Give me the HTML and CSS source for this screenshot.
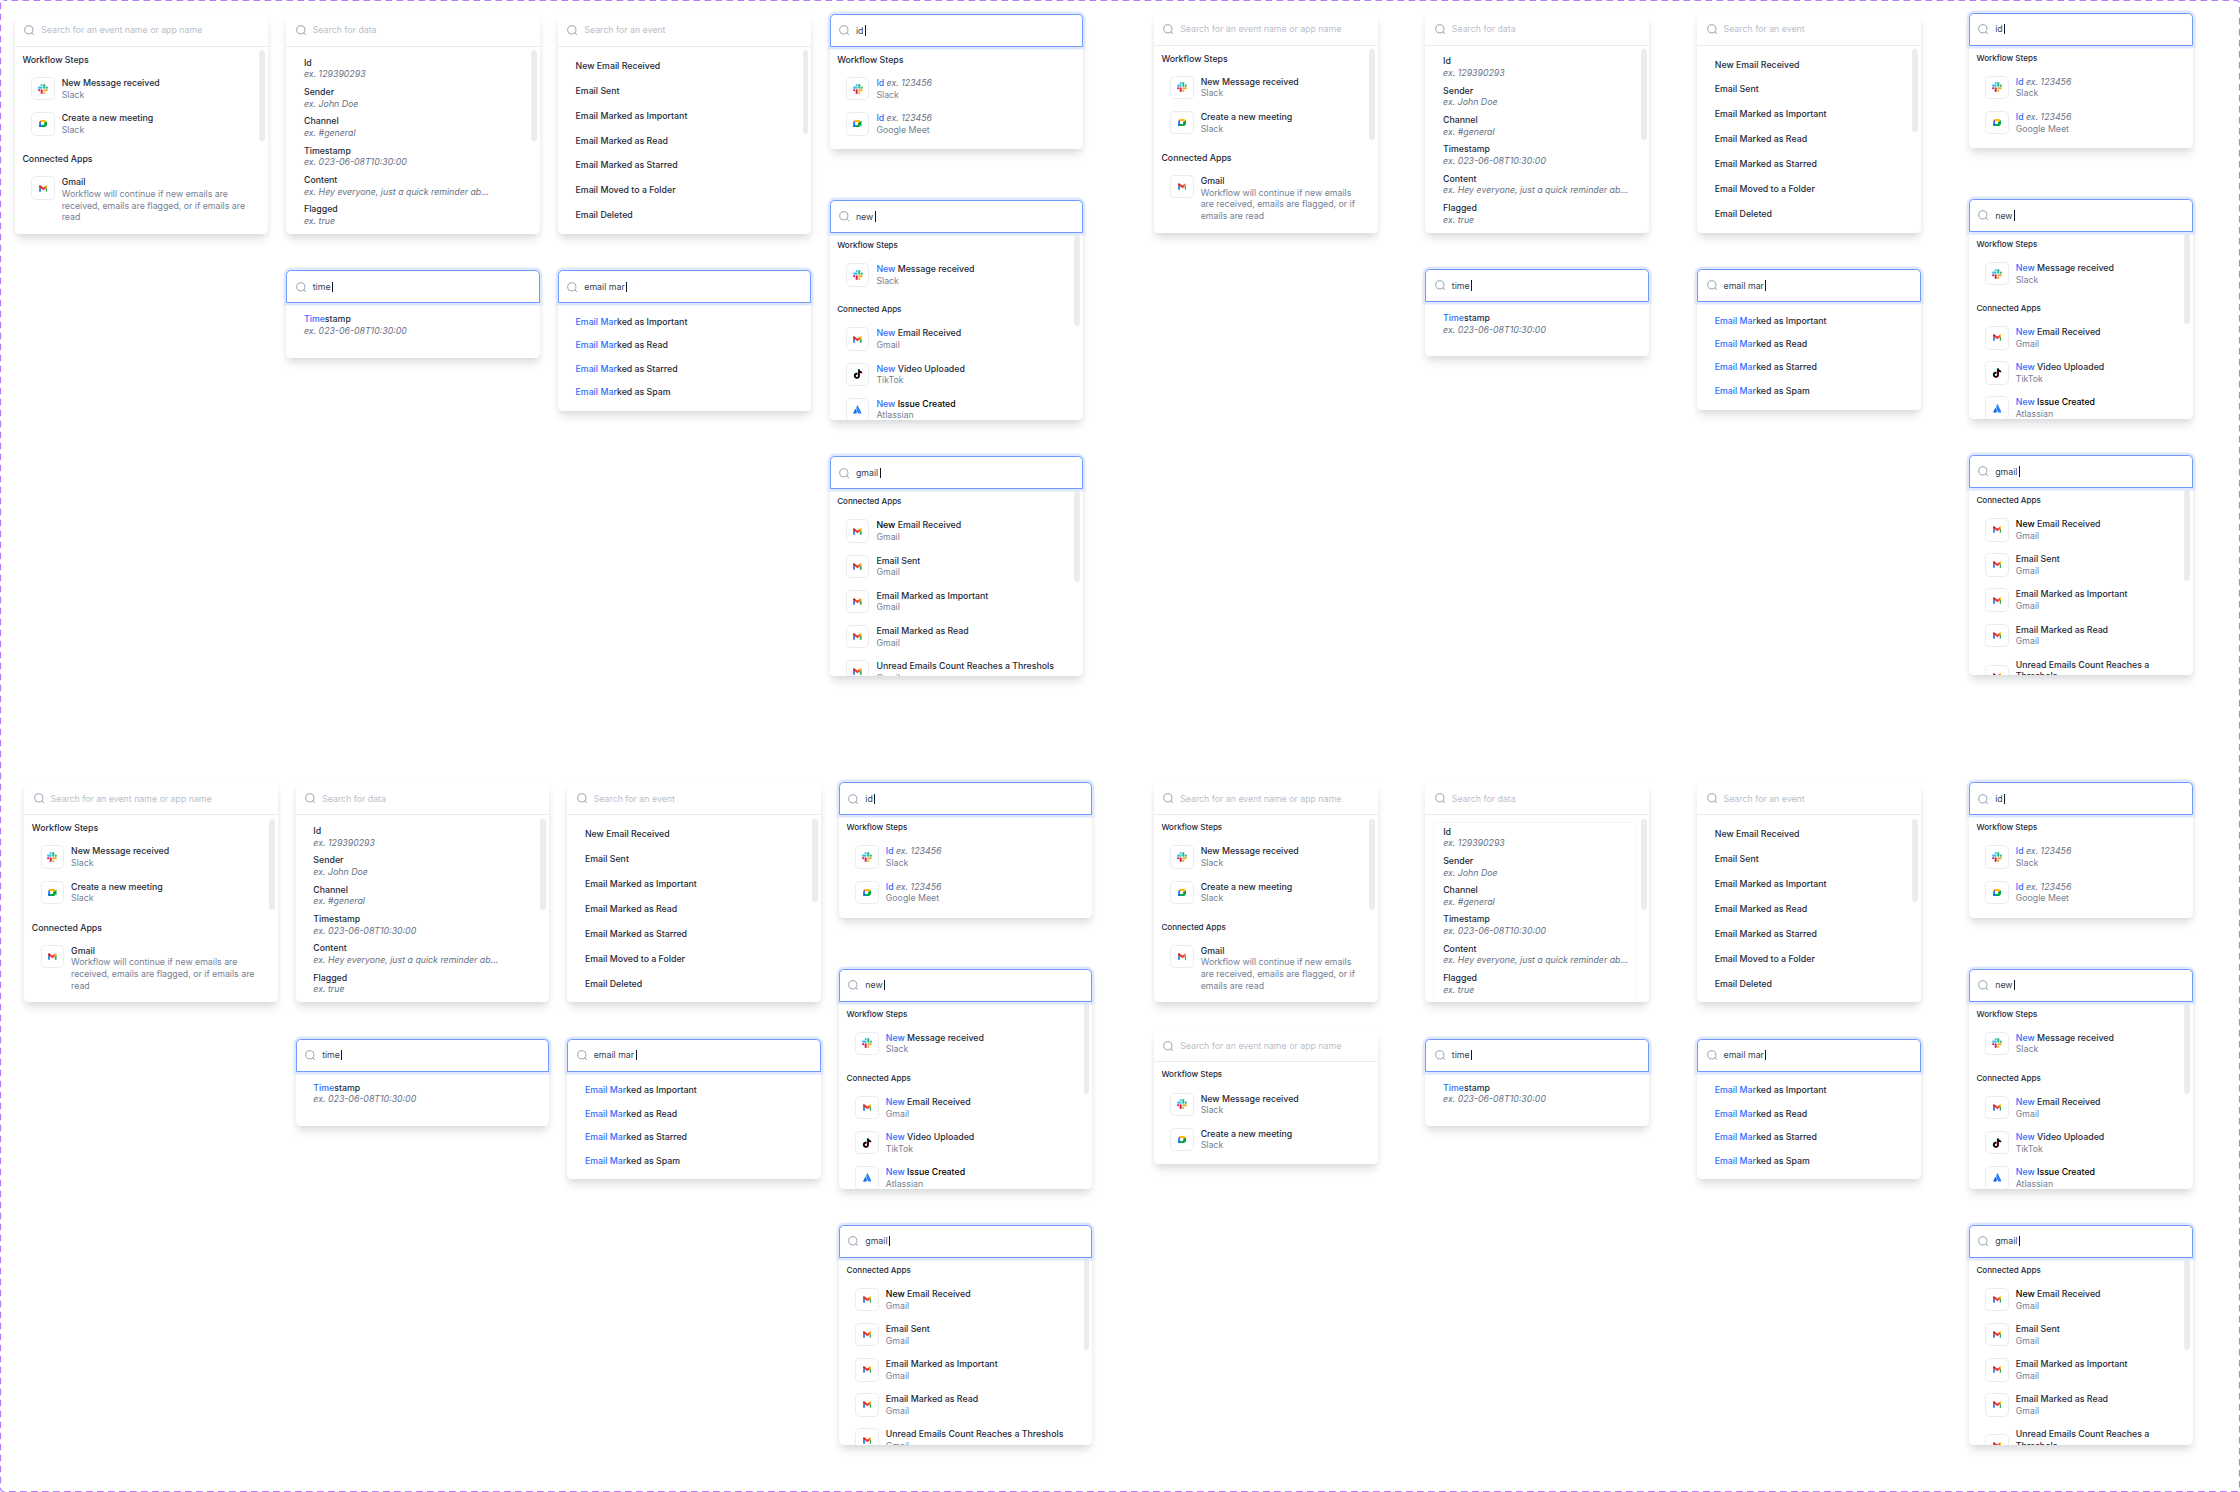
FILE: index.html
```html
<!DOCTYPE html>
<html lang="en">
<head>
  <meta charset="UTF-8">
  <meta name="viewport" content="width=device-width,initial-scale=1">
  <title>Search dropdowns</title>
  <link rel="stylesheet" href="styles.css">
</head>
<body>
  <!-- Icons -->
  <svg class="sprite">
    <symbol id="search" viewBox="0 0 18 18">
      <circle cx="8.2" cy="8.2" r="7" fill="none" stroke="#98a2b3" stroke-width="1.7"/>
      <path d="M13.2 13.2l3.8 3.8" fill="none" stroke="#98a2b3" stroke-width="1.7" stroke-linecap="round"/>
    </symbol>
    <symbol id="slack" viewBox="0 0 24 24">
      <path fill="#E01E5A" d="M5.042 15.165a2.528 2.528 0 0 1-2.52 2.523A2.528 2.528 0 0 1 0 15.165a2.527 2.527 0 0 1 2.522-2.52h2.52v2.52zM6.313 15.165a2.527 2.527 0 0 1 2.521-2.52 2.527 2.527 0 0 1 2.521 2.52v6.313A2.528 2.528 0 0 1 8.834 24a2.528 2.528 0 0 1-2.521-2.522v-6.313z"/>
      <path fill="#36C5F0" d="M8.834 5.042a2.528 2.528 0 0 1-2.521-2.52A2.528 2.528 0 0 1 8.834 0a2.528 2.528 0 0 1 2.521 2.522v2.52H8.834zM8.834 6.313a2.528 2.528 0 0 1 2.521 2.521 2.528 2.528 0 0 1-2.521 2.521H2.522A2.528 2.528 0 0 1 0 8.834a2.528 2.528 0 0 1 2.522-2.521h6.312z"/>
      <path fill="#2EB67D" d="M18.956 8.834a2.528 2.528 0 0 1 2.522-2.521A2.528 2.528 0 0 1 24 8.834a2.528 2.528 0 0 1-2.522 2.521h-2.522V8.834zM17.688 8.834a2.528 2.528 0 0 1-2.523 2.521 2.527 2.527 0 0 1-2.52-2.521V2.522A2.527 2.527 0 0 1 15.165 0a2.528 2.528 0 0 1 2.523 2.522v6.312z"/>
      <path fill="#ECB22E" d="M15.165 18.956a2.528 2.528 0 0 1 2.523 2.522A2.528 2.528 0 0 1 15.165 24a2.527 2.527 0 0 1-2.52-2.522v-2.522h2.52zM15.165 17.688a2.527 2.527 0 0 1-2.52-2.523 2.526 2.526 0 0 1 2.52-2.52h6.313A2.527 2.527 0 0 1 24 15.165a2.528 2.528 0 0 1-2.522 2.523h-6.313z"/>
    </symbol>
    <symbol id="meet" viewBox="0 0 87.5 72">
      <path fill="#00832d" d="M49.5 36l8.53 9.75 11.47 7.33 2-17.02-2-16.64-11.69 6.44z"/>
      <path fill="#0066da" d="M0 51.5V66c0 3.315 2.685 6 6 6h14.5l3-10.96-3-9.54-9.95-3z"/>
      <path fill="#e94235" d="M20.5 0L0 20.5l10.55 3 9.95-3 2.95-9.41z"/>
      <path fill="#2684fc" d="M20.5 20.5H0v31h20.5z"/>
      <path fill="#00ac47" d="M82.6 8.68L69.5 19.42v33.66l13.16 10.79c1.97 1.54 4.85.135 4.85-2.37V11c0-2.535-2.945-3.925-4.91-2.32zM49.5 36v15.5h-29V72h43c3.315 0 6-2.685 6-6V53.08z"/>
      <path fill="#ffba00" d="M63.5 0h-43v20.5h29V36l20-16.57V6c0-3.315-2.685-6-6-6z"/>
    </symbol>
    <symbol id="gmail" viewBox="52 42 88 66">
      <path fill="#4285f4" d="M58 108h14V74L52 59v43c0 3.32 2.69 6 6 6"/>
      <path fill="#34a853" d="M120 108h14c3.32 0 6-2.69 6-6V59l-20 15"/>
      <path fill="#fbbc04" d="M120 48v26l20-15v-8c0-7.42-8.47-11.65-14.4-7.2"/>
      <path fill="#ea4335" d="M72 74V48l24 18 24-18v26L96 92"/>
      <path fill="#c5221f" d="M52 51v8l20 15V48l-5.6-4.2c-5.94-4.45-14.4-.22-14.4 7.2"/>
    </symbol>
    <path id="note" d="M12.525.02c1.31-.02 2.61-.01 3.91-.02.08 1.53.63 3.09 1.75 4.17 1.12 1.11 2.7 1.62 4.24 1.79v4.03c-1.44-.05-2.89-.35-4.2-.97-.57-.26-1.1-.59-1.62-.93-.01 2.92.01 5.84-.02 8.75-.08 1.4-.54 2.79-1.35 3.94-1.31 1.92-3.58 3.17-5.91 3.21-1.43.08-2.86-.31-4.08-1.03-2.02-1.19-3.44-3.37-3.65-5.71-.02-.5-.03-1-.01-1.49.18-1.9 1.12-3.72 2.58-4.96 1.66-1.44 3.98-2.13 6.15-1.72.02 1.48-.04 2.96-.04 4.44-.99-.32-2.15-.23-3.02.37-.63.41-1.11 1.04-1.36 1.75-.21.51-.15 1.07-.14 1.61.24 1.64 1.82 3.02 3.5 2.87 1.12-.01 2.19-.66 2.77-1.61.19-.33.4-.67.41-1.06.1-1.79.06-3.57.07-5.36.01-4.03-.01-8.05.02-12.07z"/>
    <symbol id="tiktok" viewBox="-1 -1 26 26">
      <use href="#note" x="-.9" y="-.7" fill="#25f4ee"/>
      <use href="#note" x=".9" y=".7" fill="#fe2c55"/>
      <use href="#note"/>
    </symbol>
    <symbol id="atlassian" viewBox="0 0 24 24">
      <path fill="#1868db" d="M7.12 11.084a.683.683 0 0 0-1.16.126L.075 22.974a.703.703 0 0 0 .63 1.018h8.19a.678.678 0 0 0 .63-.39c1.767-3.65.696-9.203-2.406-12.52z"/>
      <path fill="#2684ff" d="M11.434.386a15.515 15.515 0 0 0-.906 15.317l3.95 7.9a.703.703 0 0 0 .628.388h8.19a.703.703 0 0 0 .63-1.017L12.63.38a.664.664 0 0 0-1.196.006z"/>
    </symbol>
  </svg>

  <main id="boards"></main>
  <svg class="frame"><rect x=".5" y=".5" width="2239" height="1491" rx="3"/></svg>

  <script src="script.js"></script>
</body>
</html>
```
FILE: styles.css
```css
/* 1rem = 10 design px */
html { font-size:5.862px; }
body { margin:0; background:#fff; color:#1d2939; font-family:Inter, sans-serif; font-size:1.5rem; line-height:2rem; overflow:hidden; }
.sprite { display:none; }
.frame { position:absolute; top:0; left:0; width:2240px; height:1492px; pointer-events:none; }
.frame rect { fill:none; stroke:#b57bff; stroke-width:1.2; stroke-dasharray:6.6 4.4; stroke-dashoffset:3; }

#boards { display:grid; grid-template-columns:1153.8px 1fr; grid-template-rows:782.4px 1fr; width:2240px; height:1492px; }
.board { display:grid; grid-template-columns:repeat(4, 253.4px); column-gap:18.2px; align-items:start; align-content:start; }
.board.narrow { grid-template-columns:repeat(4, 224px); column-gap:47.7px; }
.b1 { padding:14px 0 0 14.8px; }
.b2 { padding-top:12.7px; }
.b3 { padding-left:24.2px; }
.col { display:flex; flex-direction:column; gap:36.6px; }
.col.hits { gap:36.3px; }
.col.hits .card:first-child { margin-bottom:14.6px; }
.col.short { gap:27.4px; }

/* Dropdown card */
.card { display:flex; flex-direction:column; border-radius:.8rem; background:#fff; box-shadow:0 1.2rem 1.6rem -.4rem rgba(16,24,40,.12), 0 .4rem 1rem -.2rem rgba(16,24,40,.06); }
.field-box { display:flex; align-items:center; gap:1.1rem; height:5.6rem; box-sizing:border-box; flex:none; padding:.1rem 0 0 1.6rem; border-bottom:1px solid #eaecf0; border-radius:.8rem .8rem 0 0; color:#b9c0cc; background:#fff; }
.field-box svg { flex:none; width:1.8rem; height:1.8rem; }
.field-box.focus { position:relative; z-index:1; padding:0 0 0 calc(1.6rem - 1px); border:1px solid #6f99ff; box-shadow:0 0 0 2.4px #dfe8ff; color:#344054; }
.caret { width:1px; height:1.8rem; margin-left:-.85rem; background:#101828; }
.results { position:relative; flex:1; min-height:0; overflow:hidden; border-radius:0 0 .8rem .8rem; }
.bar { position:absolute; top:.6rem; right:.5rem; width:1rem; height:15.5rem; border-radius:.5rem; background:#eaecf0; }
.focus + .results .bar { top:.3rem; }
.bar.small { height:14.2rem; }

/* Sections with app icons */
h2 { margin:0; padding:1.2rem 1.3rem .95rem; font-size:1.5rem; line-height:2rem; font-weight:500; }
h2.sm { font-size:1.375rem; }
.item + h2 { padding-top:2rem; }
.item { display:flex; align-items:flex-start; gap:1.2rem; padding:1rem 2.3rem 1rem 2.8rem; }
.item.mid { align-items:center; }
.app { flex:none; display:flex; align-items:center; justify-content:center; width:4rem; height:4rem; box-sizing:border-box; border:1px solid #eaecf0; border-radius:.8rem; }
.app svg { width:1.7rem; height:1.7rem; }
.app .meet, .app .gmail { width:1.5rem; height:1.2rem; }
.app .atlassian { width:1.5rem; height:1.5rem; }
.name { font-weight:500; }
.sub { color:#758095; }
.hit { color:#2f6bff; font-weight:500; }
.strong { color:#000; }
i { color:#667085; font-weight:400; }

/* Text-only lists */
.list { padding:1.2rem 3rem 0; }
.list.boxed { margin:1.1rem 2.1rem 0 1.3rem; padding:0 0 0 1.55rem; height:100%; border:1px solid #f5f6f8; border-radius:.8rem; }
.field { padding:.5rem 0; white-space:nowrap; }
.event { padding:1.125rem 0; font-weight:500; }
.found { padding-top:1.15rem; }
.found .event { padding:1rem 0; }
.events { padding-top:1.1rem; }
```
FILE: script.js
```js
const icon = name => `<svg class="${name}"><use href="#${name}"/></svg>`;
const app = name => `<div class="app">${icon(name)}</div>`;
const hit = t => `<span class="hit">${t}</span>`;

function item(ico, name, sub, cls = '') {
  return `<div class="item ${cls}">${app(ico)}<div><div class="name">${name}</div><div class="sub">${sub}</div></div></div>`;
}
function head(text, small) {
  return `<h2 class="${small ? 'sm' : ''}">${text}</h2>`;
}
function field(name, ex) {
  return `<div class="field"><div class="name">${name}</div><i>ex. ${ex}</i></div>`;
}
const event = text => `<div class="event">${text}</div>`;

// height is in design px
function card(height, placeholder, query, body, bar = '') {
  const search = query
    ? `<div class="field-box focus">${icon('search')}<span>${query}</span><span class="caret"></span></div>`
    : `<div class="field-box">${icon('search')}<span>${placeholder}</span></div>`;
  return `<section class="card" style="height:${height / 10}rem">${search}<div class="results">${body}${bar}</div></section>`;
}

const bar = '<div class="bar"></div>';
const smallBar = '<div class="bar small"></div>';

function board({ cls, narrow, smallHeads, smallId, boxed, extra }) {
  const steps = head('Workflow Steps', smallHeads)
    + item('slack', 'New Message received', 'Slack')
    + item('meet', 'Create a new meeting', 'Slack');
  const gmail = head('Connected Apps', smallHeads)
    + item('gmail', 'Gmail', 'Workflow will continue if new emails are received, emails are flagged, or if emails are read');
  const fields = [
    ['Id', '129390293'], ['Sender', 'John Doe'], ['Channel', '#general'],
    ['Timestamp', '023-06-08T10:30:00'], ['Content', 'Hey everyone, just a quick reminder ab...'], ['Flagged', 'true']
  ].map(f => field(...f)).join('');
  const events = ['New Email Received', 'Email Sent', 'Email Marked as Important', 'Email Marked as Read',
    'Email Marked as Starred', 'Email Moved to a Folder', 'Email Deleted'].map(event).join('');
  const marked = ['Important', 'Read', 'Starred', 'Spam'].map(t => event(`${hit('Email Mar')}ked as ${t}`)).join('');

  return `<div class="board ${cls} ${narrow ? 'narrow' : ''}">
    <div class="col short">
      ${card(375, 'Search for an event name or app name', '', steps + gmail, bar)}
      ${extra ? card(230, 'Search for an event name or app name', '', steps) : ''}
    </div>
    <div class="col">
      ${card(375, 'Search for data', '', `<div class="list ${boxed ? 'boxed' : ''}">${fields}</div>`, bar)}
      ${card(149, '', 'time', `<div class="list">${field(hit('Time') + 'stamp', '023-06-08T10:30:00')}</div>`)}
    </div>
    <div class="col">
      ${card(375, 'Search for an event', '', `<div class="list events">${events}</div>`, smallBar)}
      ${card(240, '', 'email mar', `<div class="list found">${marked}</div>`)}
    </div>
    <div class="col hits">
      ${card(231, '', 'id', head('Workflow Steps', smallId)
        + item('slack', `${hit('Id')} <i>ex. 123456</i>`, 'Slack')
        + item('meet', `${hit('Id')} <i>ex. 123456</i>`, 'Google Meet'))}
      ${card(375, '', 'new', head('Workflow Steps', true)
        + item('slack', `${hit('New')} Message received`, 'Slack')
        + head('Connected Apps', true)
        + item('gmail', `${hit('New')} Email Received`, 'Gmail')
        + item('tiktok', `${hit('New')} Video Uploaded`, 'TikTok')
        + item('atlassian', `${hit('New')} <span class="strong">Issue Created</span>`, 'Atlassian'), bar)}
      ${card(375, '', 'gmail', head('Connected Apps', true)
        + item('gmail', '<span class="strong">New</span> Email Received', 'Gmail')
        + item('gmail', 'Email Sent', 'Gmail')
        + item('gmail', 'Email Marked as Important', 'Gmail')
        + item('gmail', 'Email Marked as Read', 'Gmail')
        + item('gmail', 'Unread Emails Count Reaches a Threshols', 'Gmail', 'mid'), bar)}
    </div>
  </div>`;
}

document.getElementById('boards').innerHTML = [
  { cls: 'b1' },
  { cls: 'b2', narrow: true, smallId: true },
  { cls: 'b3', smallId: true },
  { cls: 'b4', narrow: true, smallHeads: true, smallId: true, boxed: true, extra: true }
].map(board).join('');
```
